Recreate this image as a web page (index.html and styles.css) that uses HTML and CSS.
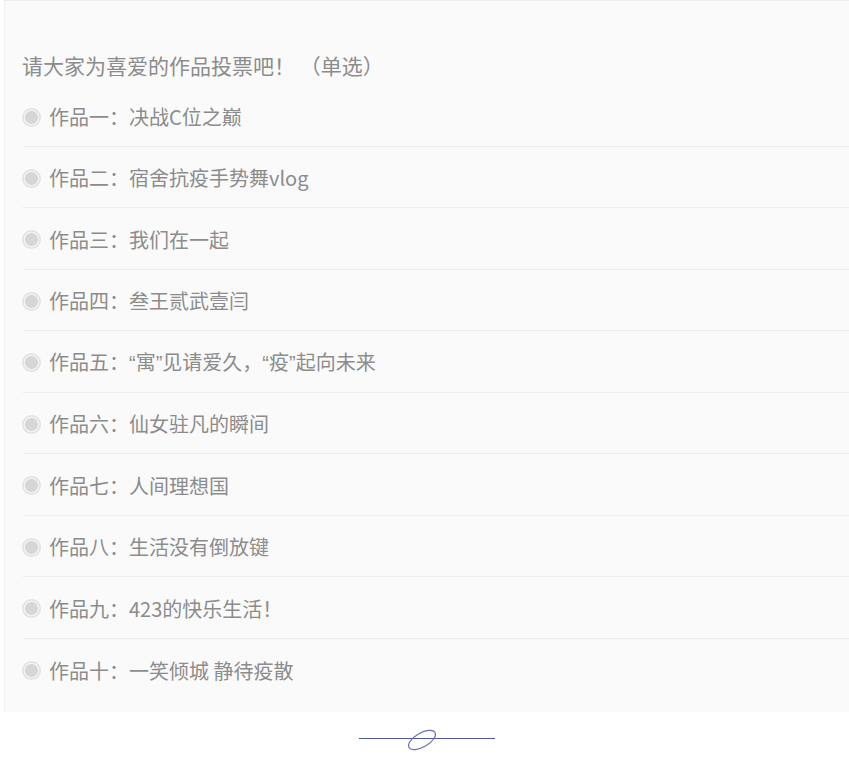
FILE: index.html
```html
<!DOCTYPE html>
<html lang="zh-CN">
<head>
<meta charset="utf-8">
<title>投票</title>
<link rel="stylesheet" href="styles.css">
</head>
<body>
<div class="panel">
  <div class="title">请大家为喜爱的作品投票吧！ （单选）</div>
  <ul class="options">
    <li class="option"><span class="radio"></span><span class="label">作品一：决战C位之巅</span></li>
    <li class="option"><span class="radio"></span><span class="label">作品二：宿舍抗疫手势舞vlog</span></li>
    <li class="option"><span class="radio"></span><span class="label">作品三：我们在一起</span></li>
    <li class="option"><span class="radio"></span><span class="label">作品四：叁王贰武壹闫</span></li>
    <li class="option"><span class="radio"></span><span class="label">作品五：<span class="q">“</span>寓<span class="q">”</span>见请爱久，<span class="q">“</span>疫<span class="q">”</span>起向未来</span></li>
    <li class="option"><span class="radio"></span><span class="label">作品六：仙女驻凡的瞬间</span></li>
    <li class="option"><span class="radio"></span><span class="label">作品七：人间理想国</span></li>
    <li class="option"><span class="radio"></span><span class="label">作品八：生活没有倒放键</span></li>
    <li class="option"><span class="radio"></span><span class="label">作品九：423的快乐生活！</span></li>
    <li class="option"><span class="radio"></span><span class="label">作品十：一笑倾城 静待疫散</span></li>
  </ul>
</div>
<div class="divider">
  <svg width="136" height="30" viewBox="0 0 136 30">
    <line x1="0" y1="15.5" x2="136" y2="15.5" stroke="#4b5796" stroke-width="1.2"/>
    <ellipse cx="63" cy="17" rx="15" ry="7" transform="rotate(-30 63 17)" fill="none" stroke="#6a6fb3" stroke-width="1.2"/>
  </svg>
</div>
</body>
</html>
```
FILE: styles.css
```css
html, body {
  margin: 0;
  padding: 0;
  background: #ffffff;
  overflow: hidden;
}
body {
  font-family: "Noto Sans CJK SC", "Noto Sans", sans-serif;
  color: #8c8c8c;
}
.panel {
  margin: 0 -20px 0 4px;
  background: #fafafa;
  border-top: 1px solid #ececec;
  border-left: 1px solid #f1f1f1;
  padding: 47px 0 12px 17px;
}
.title {
  font-size: 21px;
  line-height: 34px;
  height: 38px;
}
.options {
  list-style: none;
  margin: 0;
  padding: 0 0 0 1px;
}
.option {
  display: flex;
  align-items: center;
  height: 60.5px;
  padding-top: 2.5px;
  box-sizing: border-box;
  border-bottom: 1px solid #ededed;
  font-size: 20px;
}
.option + .option {
  height: 61.5px;
  padding-top: 3px;
}
.option:last-child {
  border-bottom: none;
}
.radio {
  width: 19px;
  height: 19px;
  border-radius: 50%;
  background: radial-gradient(circle, #d6d6d6 0, #d6d6d6 6px, #f2f2f2 6.8px, #f2f2f2 7.6px, #e2e2e2 8.2px, #e2e2e2 9.5px);
  flex: none;
  margin-left: -1px;
}
.label {
  margin-left: 8px;
  line-height: 30px;
}
.q {
  font-family: "Liberation Sans", sans-serif;
}
.divider {
  display: flex;
  justify-content: center;
  padding-left: 5px;
  margin-top: 11px;
}
.divider svg {
  display: block;
}
```
